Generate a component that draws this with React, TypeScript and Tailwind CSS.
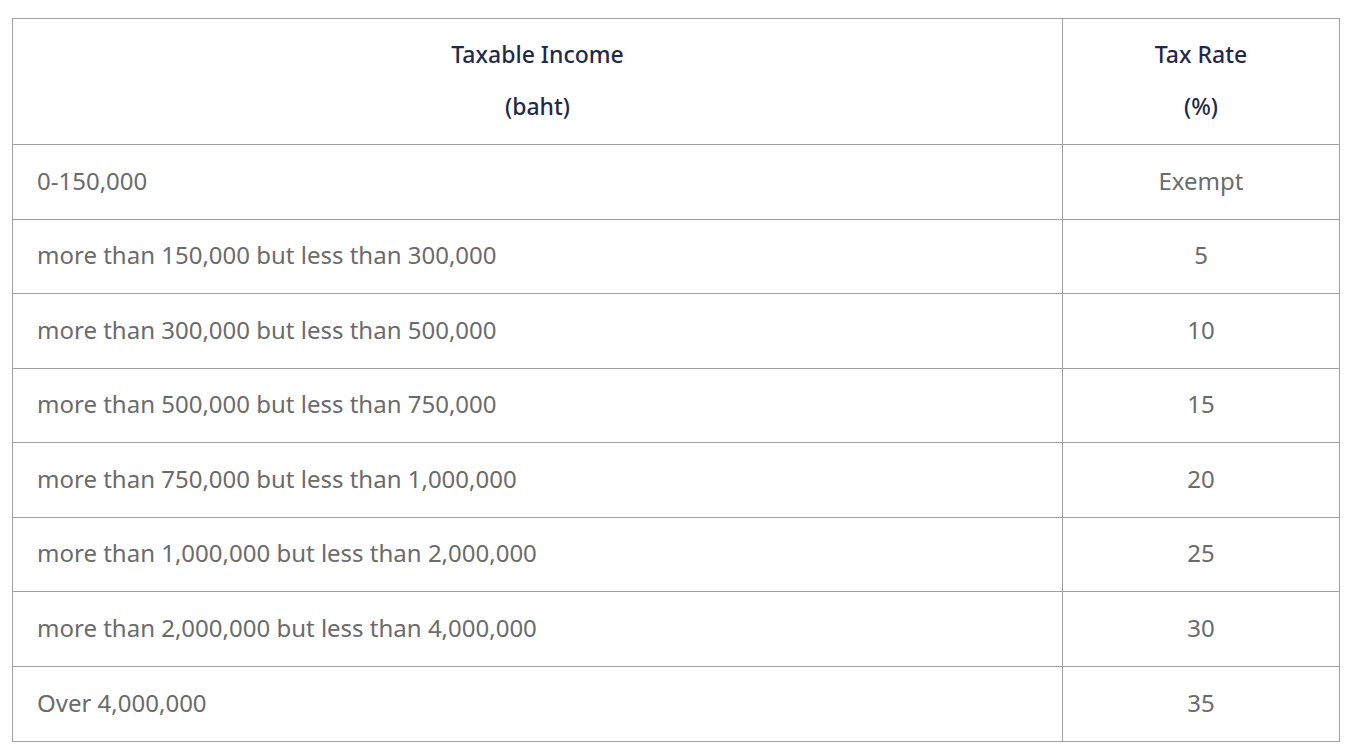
import React from "react";

const rows: { income: string; rate: string; h: string }[] = [
  { income: "0-150,000", rate: "Exempt", h: "h-[75px]" },
  { income: "more than 150,000 but less than 300,000", rate: "5", h: "h-[74px]" },
  { income: "more than 300,000 but less than 500,000", rate: "10", h: "h-[75px]" },
  { income: "more than 500,000 but less than 750,000", rate: "15", h: "h-[74px]" },
  { income: "more than 750,000 but less than 1,000,000", rate: "20", h: "h-[75px]" },
  { income: "more than 1,000,000 but less than 2,000,000", rate: "25", h: "h-[74px]" },
  { income: "more than 2,000,000 but less than 4,000,000", rate: "30", h: "h-[75px]" },
  { income: "Over 4,000,000", rate: "35", h: "h-[75px]" },
];

export default function App() {
  return (
    <div className="min-h-screen bg-white pt-[18px] pl-[12px]" style={{ fontFamily: '"Noto Sans", "Open Sans", sans-serif' }}>
      <table className="w-[1327px] border-collapse border border-[#a0a0a0] table-fixed">
        <colgroup>
          <col className="w-[1050px]" />
          <col className="w-[277px]" />
        </colgroup>
        <thead>
          <tr className="h-[126px]">
            <th className="border border-[#a0a0a0] pb-[4px] text-center font-medium text-[23px] leading-[52px] text-[#1f2a48]">
              Taxable Income
              <br />
              (baht)
            </th>
            <th className="border border-[#a0a0a0] pb-[4px] text-center font-medium text-[23px] leading-[52px] text-[#1f2a48]">
              Tax Rate
              <br />
              (%)
            </th>
          </tr>
        </thead>
        <tbody>
          {rows.map((r) => (
            <tr key={r.income} className={r.h}>
              <td className="border border-[#a0a0a0] pl-[24px] pb-[3px] text-[24px] leading-[32px] text-[#6b6b6b]">{r.income}</td>
              <td className="border border-[#a0a0a0] pb-[3px] text-center text-[24px] leading-[32px] text-[#6b6b6b]">{r.rate}</td>
            </tr>
          ))}
        </tbody>
      </table>
    </div>
  );
}
